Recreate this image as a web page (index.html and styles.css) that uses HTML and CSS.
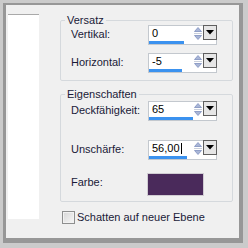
FILE: index.html
```html
<!DOCTYPE html>
<html lang="de">
<head>
    <meta charset="UTF-8">
    <title>Schatten</title>
    <link rel="stylesheet" href="styles.css">
</head>
<body>
    <div class="window">
        <div class="list"></div>
        <div class="panel">
            <fieldset class="group group-offset">
                <legend>Versatz</legend>
                <div class="row">
                    <span class="label">Vertikal:</span>
                    <div class="spin">
                        <div class="spin-top">
                            <span class="spin-value">0</span>
                            <svg class="spin-arrows" width="10" height="15" viewBox="0 0 10 15">
                                <path d="M1.5 5.5 L5 1.5 L8.5 5.5 Z" fill="#a9b6d6" stroke="#7f8fbf" stroke-width="0.8"/>
                                <line x1="1" y1="7.5" x2="9" y2="7.5" stroke="#c9cfdc"/>
                                <path d="M1.5 9.5 L5 13.5 L8.5 9.5 Z" fill="#a9b6d6" stroke="#7f8fbf" stroke-width="0.8"/>
                            </svg>
                            <span class="spin-drop"><svg width="8" height="5" viewBox="0 0 8 5"><path d="M0 0 H8 L4 4.5 Z" fill="#000"/></svg></span>
                        </div>
                        <div class="spin-bar" style="width: 35px"></div>
                    </div>
                </div>
                <div class="row row-next">
                    <span class="label">Horizontal:</span>
                    <div class="spin">
                        <div class="spin-top">
                            <span class="spin-value">-5</span>
                            <svg class="spin-arrows" width="10" height="15" viewBox="0 0 10 15">
                                <path d="M1.5 5.5 L5 1.5 L8.5 5.5 Z" fill="#a9b6d6" stroke="#7f8fbf" stroke-width="0.8"/>
                                <line x1="1" y1="7.5" x2="9" y2="7.5" stroke="#c9cfdc"/>
                                <path d="M1.5 9.5 L5 13.5 L8.5 9.5 Z" fill="#a9b6d6" stroke="#7f8fbf" stroke-width="0.8"/>
                            </svg>
                            <span class="spin-drop"><svg width="8" height="5" viewBox="0 0 8 5"><path d="M0 0 H8 L4 4.5 Z" fill="#000"/></svg></span>
                        </div>
                        <div class="spin-bar" style="width: 33px"></div>
                    </div>
                </div>
            </fieldset>

            <fieldset class="group group-props">
                <legend>Eigenschaften</legend>
                <div class="row">
                    <span class="label">Deckfähigkeit:</span>
                    <div class="spin">
                        <div class="spin-top">
                            <span class="spin-value">65</span>
                            <svg class="spin-arrows" width="10" height="15" viewBox="0 0 10 15">
                                <path d="M1.5 5.5 L5 1.5 L8.5 5.5 Z" fill="#a9b6d6" stroke="#7f8fbf" stroke-width="0.8"/>
                                <line x1="1" y1="7.5" x2="9" y2="7.5" stroke="#c9cfdc"/>
                                <path d="M1.5 9.5 L5 13.5 L8.5 9.5 Z" fill="#a9b6d6" stroke="#7f8fbf" stroke-width="0.8"/>
                            </svg>
                            <span class="spin-drop"><svg width="8" height="5" viewBox="0 0 8 5"><path d="M0 0 H8 L4 4.5 Z" fill="#000"/></svg></span>
                        </div>
                        <div class="spin-bar" style="width: 44px"></div>
                    </div>
                </div>
                <div class="row row-blur">
                    <span class="label">Unschärfe:</span>
                    <div class="spin">
                        <div class="spin-top">
                            <span class="spin-value">56,00<span class="caret"></span></span>
                            <svg class="spin-arrows" width="10" height="15" viewBox="0 0 10 15">
                                <path d="M1.5 5.5 L5 1.5 L8.5 5.5 Z" fill="#a9b6d6" stroke="#7f8fbf" stroke-width="0.8"/>
                                <line x1="1" y1="7.5" x2="9" y2="7.5" stroke="#c9cfdc"/>
                                <path d="M1.5 9.5 L5 13.5 L8.5 9.5 Z" fill="#a9b6d6" stroke="#7f8fbf" stroke-width="0.8"/>
                            </svg>
                            <span class="spin-drop"><svg width="8" height="5" viewBox="0 0 8 5"><path d="M0 0 H8 L4 4.5 Z" fill="#000"/></svg></span>
                        </div>
                        <div class="spin-bar" style="width: 38px"></div>
                    </div>
                </div>
                <div class="row row-color">
                    <span class="label">Farbe:</span>
                    <div class="swatch"></div>
                </div>
            </fieldset>

            <label class="check">
                <span class="check-box"></span>
                Schatten auf neuer Ebene
            </label>
        </div>
    </div>
</body>
</html>
```

FILE: styles.css
```css
html, body {
    margin: 0;
    padding: 0;
}

body {
    width: 248px;
    height: 248px;
    background-color: #cbcbcb;
    font-family: "Liberation Sans", Arial, sans-serif;
    font-size: 11px;
    color: #1a1a38;
    overflow: hidden;
}

/* dialog frame */
.window {
    box-sizing: border-box;
    width: 240px;
    height: 240px;
    margin: 3px 0 0 3px;
    border-style: solid;
    border-color: #979797;
    border-width: 2px 4px 5px 3px;
    background-color: #f0f0f0;
    display: flex;
    align-items: flex-start;
    padding: 9px 0 0 2px;
}

.list {
    box-sizing: border-box;
    width: 31px;
    height: 205px;
    background-color: #fff;
    border-top: 1px solid #a9a9a9;
}

.panel {
    width: 173px;
    margin-left: 21px;
    margin-top: 1px;
    display: flex;
    flex-direction: column;
}

/* group boxes */
.group {
    margin: 0;
    min-width: 0;
    border: 1px solid #d5d9dd;
    border-radius: 2px;
    padding: 0 0 7px 4px;
}

.group legend {
    padding: 0 2px;
    line-height: 10px;
    height: 10px;
}

.group-props {
    margin-top: 8px;
    padding-top: 2px;
    padding-bottom: 5px;
}

.row {
    display: flex;
    align-items: flex-start;
    padding-left: 6px;
}

.row-next {
    margin-top: 8px;
}

.row-blur {
    margin-top: 19px;
}

.row-color {
    margin-top: 13px;
}

.label {
    width: 77px;
    line-height: 13px;
    padding-top: 3px;
}

/* spin edit with slider bar */
.spin {
    box-sizing: border-box;
    width: 69px;
    height: 20px;
    border: 1px solid #c3c8ce;
    background-color: #fff;
    display: flex;
    flex-direction: column;
}

.spin-top {
    display: flex;
    height: 15px;
}

.spin-value {
    flex: 1;
    padding-left: 3px;
    line-height: 15px;
    color: #000;
}

.caret {
    display: inline-block;
    width: 1px;
    height: 11px;
    margin-left: 1px;
    background-color: #000;
    vertical-align: -2px;
}

.spin-arrows {
    display: block;
    flex: none;
}

.spin-drop {
    box-sizing: border-box;
    flex: none;
    width: 14px;
    height: 15px;
    margin: -1px -1px 0 0;
    border: 1px solid #5f5f5f;
    background-color: #e6e6e6;
    display: flex;
    align-items: center;
    justify-content: center;
}

.spin-bar {
    height: 3px;
    margin-top: auto;
    background-color: #3b92ef;
}

.swatch {
    box-sizing: border-box;
    width: 57px;
    height: 23px;
    margin-left: -1px;
    background-color: #4a2a5b;
    border: 1px solid #d0ccd2;
}

/* checkbox */
.check {
    display: flex;
    align-items: center;
    height: 13px;
    margin-top: 9px;
    margin-left: 2px;
    line-height: 13px;
}

.check-box {
    box-sizing: border-box;
    width: 13px;
    height: 13px;
    margin-right: 2px;
    border: 1px solid #8e8f8f;
    background: linear-gradient(135deg, #d6d6d6, #f7f7f7);
    box-shadow: inset 0 0 0 1px #f2f2f2;
}
```
